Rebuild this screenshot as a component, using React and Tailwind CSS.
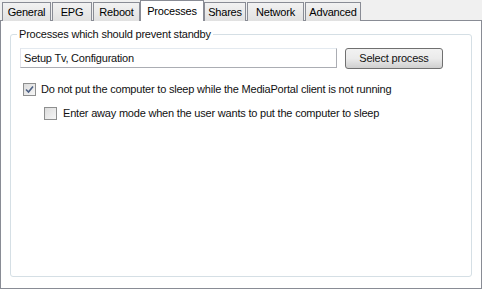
const tabs = [
  { label: "General", w: "w-[49px]" },
  { label: "EPG", w: "w-[40px]" },
  { label: "Reboot", w: "w-[47px]" },
  { label: "Processes", w: "w-[64px]", active: true },
  { label: "Shares", w: "w-[42px]" },
  { label: "Network", w: "w-[57px]" },
  { label: "Advanced", w: "w-[56px]" },
];

function Tab({ label, w, active }) {
  if (active) {
    return (
      <div className={`relative z-10 -mx-[1px] h-[21px] border border-b-0 border-[#898c95] bg-white pt-[3px] text-center text-[11px] leading-[14px] tracking-[-0.2px] text-black ${w}`}>
        {label}
      </div>
    );
  }
  return (
    <div className={`mt-[2px] h-[19px] border border-b-0 border-[#898c95] bg-gradient-to-b from-[#f2f2f2] to-[#e1e1e1] pt-[2px] text-center text-[11px] leading-[14px] tracking-[-0.2px] text-black ${w}`}>
      {label}
    </div>
  );
}

function Checkbox({ checked }) {
  return (
    <div className="flex h-[13px] w-[13px] shrink-0 items-center justify-center border border-[#8e8f8f] bg-gradient-to-br from-[#dcdcdc] to-[#f6f6f6]">
      {checked && (
        <svg width="9" height="9" viewBox="0 0 9 9">
          <path d="M1 4.5 L3.5 7 L8 1.5" fill="none" stroke="#4d6185" strokeWidth="1.6" />
        </svg>
      )}
    </div>
  );
}

export default function App() {
  return (
    <div className="h-[289px] w-[482px] bg-[#f0f0f0] font-['Liberation_Sans',sans-serif] text-[11px] tracking-[-0.2px] text-[#111]">
      <div className="flex h-[21px] gap-[1px] pl-[2px]">
        {tabs.map((t) => (
          <Tab key={t.label} {...t} />
        ))}
      </div>
      <div className="-mt-px h-[269px] border border-[#898c95] bg-white px-[9px] pt-[13px] pb-[11px]">
        <div className="relative h-full rounded-[3px] border border-[#d5dfe5] px-[9px] pt-[12px]">
          <div className="absolute -top-[8px] left-[6px] bg-white px-[2px] leading-[14px]">
            Processes which should prevent standby
          </div>
          <div className="flex items-center gap-[8px]">
            <div className="flex h-[20px] w-[317px] items-center border border-[#abadb3] border-t-[#e3e9ef] border-l-[#e2e3ea] px-[3px]">
              Setup Tv, Configuration
            </div>
            <button className="mt-[1px] h-[21px] w-[98px] rounded-[3px] border border-[#707070] bg-gradient-to-b from-[#f2f2f2] via-[#ebebeb] to-[#cfcfcf] text-[11px]">
              Select process
            </button>
          </div>
          <div className="mt-[13px] flex items-center gap-[5px] pl-[3px]">
            <Checkbox checked />
            <span className="leading-[14px]">
              Do not put the computer to sleep while the MediaPortal client is not running
            </span>
          </div>
          <div className="mt-[10px] flex items-center gap-[6px] pl-[24px]">
            <Checkbox />
            <span className="leading-[14px]">
              Enter away mode when the user wants to put the computer to sleep
            </span>
          </div>
        </div>
      </div>
    </div>
  );
}
